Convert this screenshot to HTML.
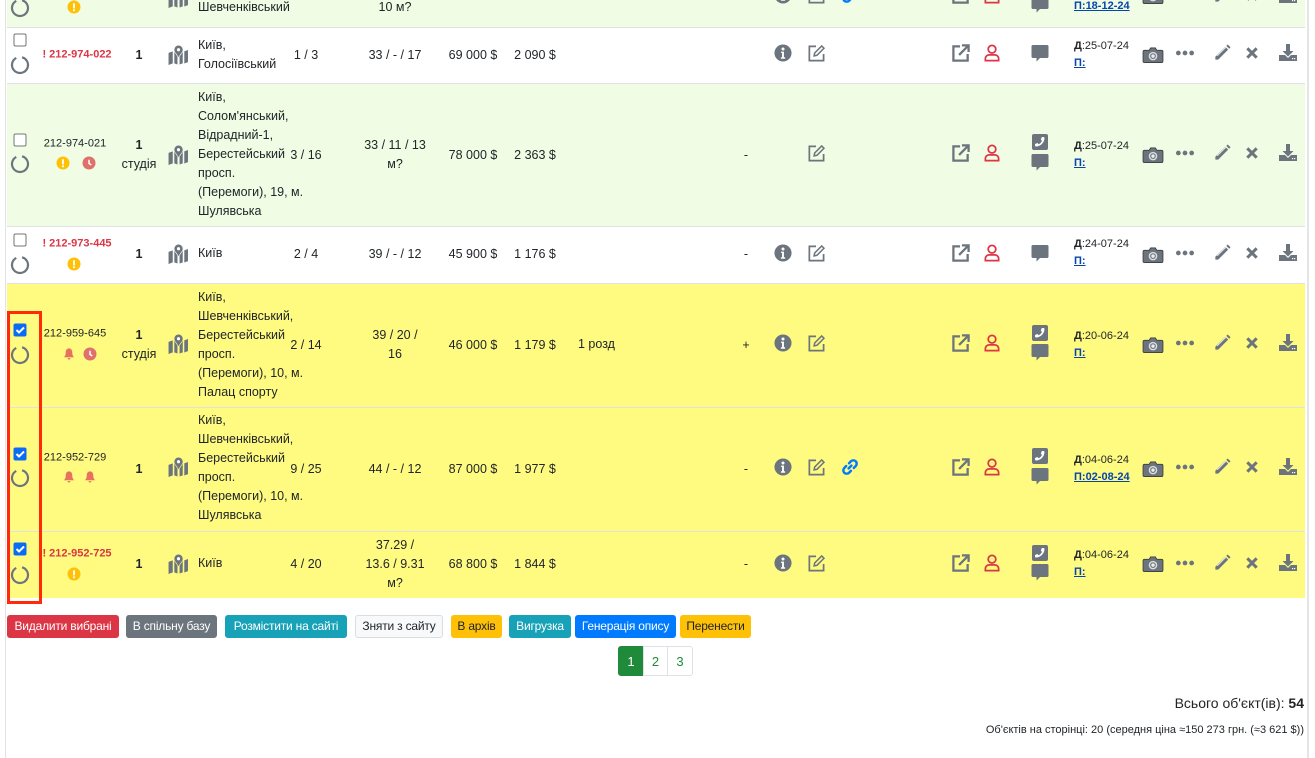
<!DOCTYPE html>
<html><head><meta charset="utf-8">
<style>
*{margin:0;padding:0;box-sizing:border-box}
body{width:1315px;height:758px;overflow:hidden;background:#fff;font-family:"Liberation Sans",Arial,sans-serif;font-size:12.5px;color:#212529;position:relative}
.row{position:absolute;left:7px;width:1298px;border-bottom:1px solid #dee2e6}
.g{background:#f0fce4}.w{background:#fff}.y{background:#fffb80}
.a{position:absolute;transform:translate(-50%,-50%);white-space:nowrap;line-height:1}
.t{position:absolute;white-space:nowrap;line-height:19px}
.cb{width:13px;height:13px;border:1px solid #767676;border-radius:2px;background:#fff}
.cb.on{background:#0a6cf5;border-color:#0a6cf5}
.rid{color:#dc3545;font-weight:bold;font-size:11px}
.id{font-size:11px}
.b{font-weight:bold}
.dt{position:absolute;font-size:11px;line-height:17px;white-space:nowrap}
.dt u{color:#0645ad;font-weight:bold}
.btn{position:absolute;top:615px;height:23px;border-radius:3px;color:#fff;font-size:12px;line-height:23px;text-align:center;letter-spacing:-0.2px}
.pg{position:absolute;top:646px;height:30px;line-height:30px;text-align:center;font-size:13px;color:#1e8a3a;border:1px solid #dee2e6}
</style></head><body>
<svg width="0" height="0" style="position:absolute">
<defs>
<symbol id="ld" viewBox="0 0 20 20"><circle cx="10" cy="10" r="8" fill="none" stroke="#6c757d" stroke-width="2.2" stroke-dasharray="44 6.3" transform="rotate(-75 10 10)"/></symbol>
<symbol id="wr" viewBox="0 0 14 14"><circle cx="7" cy="7" r="7" fill="#ffc107"/><rect x="6" y="3" width="2" height="5.5" fill="#fff"/><rect x="6" y="9.5" width="2" height="2" fill="#fff"/></symbol>
<symbol id="ck" viewBox="0 0 14 14"><circle cx="7" cy="7" r="7" fill="#e0706b"/><path d="M7 3.5V7.5L9.5 9" stroke="#fff" stroke-width="1.6" fill="none"/></symbol>
<symbol id="bl" viewBox="0 0 14 14"><path d="M7 1C4.5 1 3.5 3 3.5 5.5C3.5 8 2.5 9.5 1.5 10.5H12.5C11.5 9.5 10.5 8 10.5 5.5C10.5 3 9.5 1 7 1Z M5.5 11.5h3a1.5 1.5 0 0 1-3 0Z" fill="#e8705f"/></symbol>
<symbol id="mp" viewBox="0 0 20 20"><path d="M1 8l4-1.5v11.5l-4 1.5Z M6.5 7l3 4.5v7.5l-3-1Z M11.5 11.5l3-4.5v11l-3 1Z M16 6.5l3.5-1.3v11.6l-3.5 1.3Z" fill="#6c757d"/><circle cx="10.5" cy="5" r="4" fill="#6c757d"/><path d="M7 6.5L10.5 12L14 6.5Z" fill="#6c757d"/><circle cx="10.5" cy="5" r="1.5" fill="#fff"/></symbol>
<symbol id="in" viewBox="0 0 20 20"><circle cx="10" cy="10" r="9" fill="#6c757d"/><circle cx="10" cy="5.8" r="1.6" fill="#fff"/><path d="M8 8.5h3v6h1.2v1.5H7.8v-1.5H9v-4.5H8Z" fill="#fff"/></symbol>
<symbol id="ed" viewBox="0 0 20 20"><path d="M10 3H3v15h15v-7" fill="none" stroke="#6c757d" stroke-width="1.8"/><path d="M8 13l0.6-3L16 2.6l2.4 2.4L11 12.4Z" fill="none" stroke="#6c757d" stroke-width="1.6"/></symbol>
<symbol id="lk" viewBox="0 0 20 20"><path d="M8.5 11.5l3-3M9 6l2-2a3.5 3.5 0 0 1 5 5l-2 2M11 14l-2 2a3.5 3.5 0 0 1-5-5l2-2" fill="none" stroke="#007bff" stroke-width="2.6" stroke-linecap="round"/></symbol>
<symbol id="ex" viewBox="0 0 20 20"><path d="M9 3H2v15h15v-7" fill="none" stroke="#6c757d" stroke-width="2.4"/><path d="M8 12L17 3M11 2h7v7" fill="none" stroke="#6c757d" stroke-width="2.4"/></symbol>
<symbol id="ps" viewBox="0 0 20 20"><circle cx="10" cy="6" r="4" fill="none" stroke="#dc3545" stroke-width="1.8"/><path d="M3 18v-2a4 4 0 0 1 4-4h6a4 4 0 0 1 4 4v2Z" fill="none" stroke="#dc3545" stroke-width="1.8"/></symbol>
<symbol id="ch" viewBox="0 0 20 20"><path d="M3 2h14a1.5 1.5 0 0 1 1.5 1.5v10a1.5 1.5 0 0 1-1.5 1.5H10l-3.5 3.5V15H3a1.5 1.5 0 0 1-1.5-1.5v-10A1.5 1.5 0 0 1 3 2Z" fill="#6c757d"/></symbol>
<symbol id="ph" viewBox="0 0 16 16"><rect x="0" y="0" width="16" height="16" rx="2" fill="#6c757d"/><path d="M11.5 3c0.5 0 1 0.5 1 1 0 4.5-4 8.5-8.5 8.5-0.5 0-1-0.5-1-1l0-1.5 2.5-1 1.2 1.2c1.5-0.7 2.6-1.8 3.3-3.3L8.8 5.7l1-2.7Z" fill="#fff"/></symbol>
<symbol id="cm" viewBox="0 0 22 20"><path d="M2 5h5l1.5-2.5h5L15 5h5a1.5 1.5 0 0 1 1.5 1.5v10A1.5 1.5 0 0 1 20 18H2a1.5 1.5 0 0 1-1.5-1.5v-10A1.5 1.5 0 0 1 2 5Z" fill="#6c757d" stroke="#333" stroke-width="0.8"/><circle cx="11" cy="11.2" r="4.5" fill="#ddd"/><circle cx="11" cy="11.2" r="3" fill="#6c757d"/><circle cx="11" cy="11.2" r="1.8" fill="#eee"/></symbol>
<symbol id="dt3" viewBox="0 0 20 6"><circle cx="3" cy="3" r="2.5" fill="#6c757d"/><circle cx="10" cy="3" r="2.5" fill="#6c757d"/><circle cx="17" cy="3" r="2.5" fill="#6c757d"/></symbol>
<symbol id="pn" viewBox="0 0 20 20"><path d="M3 14L13.5 3.5l3 3L6 17H3Z" fill="#6c757d"/><path d="M14.5 2.5l1.5-1.5 3 3-1.5 1.5Z" fill="#6c757d"/><path d="M5 13l9-9" stroke="#fff" stroke-width="0.8"/></symbol>
<symbol id="xx" viewBox="0 0 16 16"><path d="M3 3l10 10M13 3L3 13" stroke="#6c757d" stroke-width="3.2"/></symbol>
<symbol id="dl" viewBox="0 0 20 20"><path d="M8 1h4v7h3.5L10 13.5 4.5 8H8Z" fill="#6c757d"/><path d="M1 12h6l3 3 3-3h6v6H1Z" fill="#6c757d"/><rect x="14" y="15" width="1.2" height="1.2" fill="#fff"/><rect x="16" y="15" width="1.2" height="1.2" fill="#fff"/></symbol>
</defs></svg>

<div style="position:absolute;left:5px;top:0;width:1px;height:758px;background:#e3e3e3"></div>
<div style="position:absolute;left:1307px;top:0;width:2px;height:758px;background:#e5e5e5"></div>

<div class="row g" style="top:0;height:28px"></div>
<div class="row w" style="top:28px;height:56px"></div>
<div class="row g" style="top:84px;height:143px"></div>
<div class="row w" style="top:227px;height:57px"></div>
<div class="row y" style="top:284px;height:124px"></div>
<div class="row y" style="top:408px;height:124px"></div>
<div class="row y" style="top:532px;height:66px;border-bottom:none"></div>

<!-- ROW 0 -->
<svg class="a" style="left:20px;top:8px" width="20" height="20"><use href="#ld"/></svg>
<svg class="a" style="left:74px;top:7px" width="13" height="13"><use href="#wr"/></svg>
<svg class="a" style="left:178px;top:-2px" width="21" height="21"><use href="#mp"/></svg>
<div class="t" style="left:198px;top:-2px">Шевченківський</div>
<div class="a" style="left:395px;top:7px">10 м?</div>
<svg class="a" style="left:783px;top:-5px" width="19" height="19"><use href="#in"/></svg>
<svg class="a" style="left:816px;top:-5px" width="19" height="19"><use href="#ed"/></svg>
<svg class="a" style="left:850px;top:-5px" width="19" height="19"><use href="#lk"/></svg>
<svg class="a" style="left:961px;top:-5px" width="19" height="19"><use href="#ex"/></svg>
<svg class="a" style="left:992px;top:-5px" width="19" height="19"><use href="#ps"/></svg>
<svg class="a" style="left:1040px;top:4px" width="20" height="20"><use href="#ch"/></svg>
<div class="dt" style="left:1074px;top:-2px"><u>П:18-12-24</u></div>
<svg class="a" style="left:1153px;top:-4px" width="21" height="19"><use href="#cm"/></svg>
<svg class="a" style="left:1222px;top:-5px" width="19" height="19"><use href="#pn"/></svg>
<svg class="a" style="left:1252px;top:-5px" width="15" height="15"><use href="#xx"/></svg>
<svg class="a" style="left:1288px;top:-5px" width="20" height="20"><use href="#dl"/></svg>

<!-- ROW 1 -->
<div class="a cb" style="left:20px;top:40px"></div>
<svg class="a" style="left:20px;top:65px" width="20" height="20"><use href="#ld"/></svg>
<div class="a rid" style="left:77px;top:55px">! 212-974-022</div>
<div class="a b" style="left:139px;top:55px">1</div>
<svg class="a" style="left:178px;top:55px" width="21" height="21"><use href="#mp"/></svg>
<div class="t" style="left:198px;top:36px">Київ,<br>Голосіївський</div>
<div class="a" style="left:306px;top:55px">1 / 3</div>
<div class="a" style="left:395px;top:55px">33 / - / 17</div>
<div class="a" style="left:473px;top:55px">69 000 $</div>
<div class="a" style="left:535px;top:55px">2 090 $</div>
<svg class="a" style="left:783px;top:53px" width="19" height="19"><use href="#in"/></svg>
<svg class="a" style="left:816px;top:53px" width="19" height="19"><use href="#ed"/></svg>
<svg class="a" style="left:961px;top:53px" width="19" height="19"><use href="#ex"/></svg>
<svg class="a" style="left:992px;top:53px" width="19" height="19"><use href="#ps"/></svg>
<svg class="a" style="left:1040px;top:53px" width="20" height="20"><use href="#ch"/></svg>
<div class="dt" style="left:1074px;top:38px"><b>Д</b>:25-07-24<br><u>П:</u></div>
<svg class="a" style="left:1153px;top:55px" width="21" height="19"><use href="#cm"/></svg>
<svg class="a" style="left:1185px;top:53px" width="19" height="6"><use href="#dt3"/></svg>
<svg class="a" style="left:1222px;top:53px" width="19" height="19"><use href="#pn"/></svg>
<svg class="a" style="left:1252px;top:53px" width="15" height="15"><use href="#xx"/></svg>
<svg class="a" style="left:1288px;top:53px" width="20" height="20"><use href="#dl"/></svg>

<!-- ROW 2 -->
<div class="a cb" style="left:20px;top:140px"></div>
<svg class="a" style="left:20px;top:164px" width="20" height="20"><use href="#ld"/></svg>
<div class="a id" style="left:75px;top:144px">212-974-021</div>
<svg class="a" style="left:63px;top:163px" width="13" height="13"><use href="#wr"/></svg>
<svg class="a" style="left:89px;top:163px" width="13" height="13"><use href="#ck"/></svg>
<div class="a b" style="left:139px;top:145px">1</div>
<div class="a" style="left:139px;top:164px">студія</div>
<svg class="a" style="left:178px;top:155px" width="21" height="21"><use href="#mp"/></svg>
<div class="t" style="left:198px;top:88px">Київ,<br>Солом'янський,<br>Відрадний-1,<br>Берестейський<br>просп.<br>(Перемоги), 19, м.<br>Шулявська</div>
<div class="a" style="left:306px;top:155px">3 / 16</div>
<div class="a" style="left:395px;top:145px">33 / 11 / 13</div>
<div class="a" style="left:395px;top:164px">м?</div>
<div class="a" style="left:473px;top:155px">78 000 $</div>
<div class="a" style="left:535px;top:155px">2 363 $</div>
<div class="a" style="left:746px;top:155px">-</div>
<svg class="a" style="left:816px;top:153px" width="19" height="19"><use href="#ed"/></svg>
<svg class="a" style="left:961px;top:153px" width="19" height="19"><use href="#ex"/></svg>
<svg class="a" style="left:992px;top:153px" width="19" height="19"><use href="#ps"/></svg>
<svg class="a" style="left:1040px;top:142px" width="16" height="16"><use href="#ph"/></svg>
<svg class="a" style="left:1040px;top:162px" width="20" height="20"><use href="#ch"/></svg>
<div class="dt" style="left:1074px;top:138px"><b>Д</b>:25-07-24<br><u>П:</u></div>
<svg class="a" style="left:1153px;top:155px" width="21" height="19"><use href="#cm"/></svg>
<svg class="a" style="left:1185px;top:153px" width="19" height="6"><use href="#dt3"/></svg>
<svg class="a" style="left:1222px;top:153px" width="19" height="19"><use href="#pn"/></svg>
<svg class="a" style="left:1252px;top:153px" width="15" height="15"><use href="#xx"/></svg>
<svg class="a" style="left:1288px;top:153px" width="20" height="20"><use href="#dl"/></svg>

<!-- ROW 3 -->
<div class="a cb" style="left:20px;top:240px"></div>
<svg class="a" style="left:20px;top:265px" width="20" height="20"><use href="#ld"/></svg>
<div class="a rid" style="left:77px;top:244px">! 212-973-445</div>
<svg class="a" style="left:74px;top:264px" width="13" height="13"><use href="#wr"/></svg>
<div class="a b" style="left:139px;top:254px">1</div>
<svg class="a" style="left:178px;top:254px" width="21" height="21"><use href="#mp"/></svg>
<div class="t" style="left:198px;top:244px">Київ</div>
<div class="a" style="left:306px;top:254px">2 / 4</div>
<div class="a" style="left:395px;top:254px">39 / - / 12</div>
<div class="a" style="left:473px;top:254px">45 900 $</div>
<div class="a" style="left:535px;top:254px">1 176 $</div>
<div class="a" style="left:746px;top:254px">-</div>
<svg class="a" style="left:783px;top:253px" width="19" height="19"><use href="#in"/></svg>
<svg class="a" style="left:816px;top:253px" width="19" height="19"><use href="#ed"/></svg>
<svg class="a" style="left:961px;top:253px" width="19" height="19"><use href="#ex"/></svg>
<svg class="a" style="left:992px;top:253px" width="19" height="19"><use href="#ps"/></svg>
<svg class="a" style="left:1040px;top:253px" width="20" height="20"><use href="#ch"/></svg>
<div class="dt" style="left:1074px;top:236px"><b>Д</b>:24-07-24<br><u>П:</u></div>
<svg class="a" style="left:1153px;top:255px" width="21" height="19"><use href="#cm"/></svg>
<svg class="a" style="left:1185px;top:253px" width="19" height="6"><use href="#dt3"/></svg>
<svg class="a" style="left:1222px;top:253px" width="19" height="19"><use href="#pn"/></svg>
<svg class="a" style="left:1252px;top:253px" width="15" height="15"><use href="#xx"/></svg>
<svg class="a" style="left:1288px;top:253px" width="20" height="20"><use href="#dl"/></svg>

<!-- ROW 4 -->
<div class="a cb on" style="left:20px;top:330px"><svg width="13" height="13" style="position:absolute;left:-1px;top:-1px"><path d="M3 6.5l2.5 2.5 5-5" stroke="#fff" stroke-width="2" fill="none"/></svg></div>
<svg class="a" style="left:20px;top:355px" width="20" height="20"><use href="#ld"/></svg>
<div class="a id" style="left:75px;top:334px">212-959-645</div>
<svg class="a" style="left:69px;top:354px" width="13" height="13"><use href="#bl"/></svg>
<svg class="a" style="left:90px;top:354px" width="13" height="13"><use href="#ck"/></svg>
<div class="a b" style="left:139px;top:335px">1</div>
<div class="a" style="left:139px;top:354px">студія</div>
<svg class="a" style="left:178px;top:344px" width="21" height="21"><use href="#mp"/></svg>
<div class="t" style="left:198px;top:288px">Київ,<br>Шевченківський,<br>Берестейський<br>просп.<br>(Перемоги), 10, м.<br>Палац спорту</div>
<div class="a" style="left:306px;top:345px">2 / 14</div>
<div class="a" style="left:395px;top:335px">39 / 20 /</div>
<div class="a" style="left:395px;top:354px">16</div>
<div class="a" style="left:473px;top:345px">46 000 $</div>
<div class="a" style="left:535px;top:345px">1 179 $</div>
<div class="t" style="left:578px;top:335px">1 розд</div>
<div class="a" style="left:746px;top:345px">+</div>
<svg class="a" style="left:783px;top:343px" width="19" height="19"><use href="#in"/></svg>
<svg class="a" style="left:816px;top:343px" width="19" height="19"><use href="#ed"/></svg>
<svg class="a" style="left:961px;top:343px" width="19" height="19"><use href="#ex"/></svg>
<svg class="a" style="left:992px;top:343px" width="19" height="19"><use href="#ps"/></svg>
<svg class="a" style="left:1040px;top:333px" width="16" height="16"><use href="#ph"/></svg>
<svg class="a" style="left:1040px;top:352px" width="20" height="20"><use href="#ch"/></svg>
<div class="dt" style="left:1074px;top:328px"><b>Д</b>:20-06-24<br><u>П:</u></div>
<svg class="a" style="left:1153px;top:345px" width="21" height="19"><use href="#cm"/></svg>
<svg class="a" style="left:1185px;top:343px" width="19" height="6"><use href="#dt3"/></svg>
<svg class="a" style="left:1222px;top:343px" width="19" height="19"><use href="#pn"/></svg>
<svg class="a" style="left:1252px;top:343px" width="15" height="15"><use href="#xx"/></svg>
<svg class="a" style="left:1288px;top:343px" width="20" height="20"><use href="#dl"/></svg>

<!-- ROW 5 -->
<div class="a cb on" style="left:20px;top:454px"><svg width="13" height="13" style="position:absolute;left:-1px;top:-1px"><path d="M3 6.5l2.5 2.5 5-5" stroke="#fff" stroke-width="2" fill="none"/></svg></div>
<svg class="a" style="left:20px;top:478px" width="20" height="20"><use href="#ld"/></svg>
<div class="a id" style="left:75px;top:458px">212-952-729</div>
<svg class="a" style="left:69px;top:477px" width="13" height="13"><use href="#bl"/></svg>
<svg class="a" style="left:90px;top:477px" width="13" height="13"><use href="#bl"/></svg>
<div class="a b" style="left:139px;top:469px">1</div>
<svg class="a" style="left:178px;top:467px" width="21" height="21"><use href="#mp"/></svg>
<div class="t" style="left:198px;top:411px">Київ,<br>Шевченківський,<br>Берестейський<br>просп.<br>(Перемоги), 10, м.<br>Шулявська</div>
<div class="a" style="left:306px;top:469px">9 / 25</div>
<div class="a" style="left:395px;top:469px">44 / - / 12</div>
<div class="a" style="left:473px;top:469px">87 000 $</div>
<div class="a" style="left:535px;top:469px">1 977 $</div>
<div class="a" style="left:746px;top:469px">-</div>
<svg class="a" style="left:783px;top:467px" width="19" height="19"><use href="#in"/></svg>
<svg class="a" style="left:816px;top:467px" width="19" height="19"><use href="#ed"/></svg>
<svg class="a" style="left:850px;top:467px" width="19" height="19"><use href="#lk"/></svg>
<svg class="a" style="left:961px;top:467px" width="19" height="19"><use href="#ex"/></svg>
<svg class="a" style="left:992px;top:467px" width="19" height="19"><use href="#ps"/></svg>
<svg class="a" style="left:1040px;top:456px" width="16" height="16"><use href="#ph"/></svg>
<svg class="a" style="left:1040px;top:476px" width="20" height="20"><use href="#ch"/></svg>
<div class="dt" style="left:1074px;top:452px"><b>Д</b>:04-06-24<br><u>П:02-08-24</u></div>
<svg class="a" style="left:1153px;top:469px" width="21" height="19"><use href="#cm"/></svg>
<svg class="a" style="left:1185px;top:467px" width="19" height="6"><use href="#dt3"/></svg>
<svg class="a" style="left:1222px;top:467px" width="19" height="19"><use href="#pn"/></svg>
<svg class="a" style="left:1252px;top:467px" width="15" height="15"><use href="#xx"/></svg>
<svg class="a" style="left:1288px;top:467px" width="20" height="20"><use href="#dl"/></svg>

<!-- ROW 6 -->
<div class="a cb on" style="left:20px;top:549px"><svg width="13" height="13" style="position:absolute;left:-1px;top:-1px"><path d="M3 6.5l2.5 2.5 5-5" stroke="#fff" stroke-width="2" fill="none"/></svg></div>
<svg class="a" style="left:20px;top:575px" width="20" height="20"><use href="#ld"/></svg>
<div class="a rid" style="left:77px;top:554px">! 212-952-725</div>
<svg class="a" style="left:74px;top:574px" width="13" height="13"><use href="#wr"/></svg>
<div class="a b" style="left:139px;top:564px">1</div>
<svg class="a" style="left:178px;top:564px" width="21" height="21"><use href="#mp"/></svg>
<div class="t" style="left:198px;top:554px">Київ</div>
<div class="a" style="left:306px;top:564px">4 / 20</div>
<div class="a" style="left:395px;top:545px">37.29 /</div>
<div class="a" style="left:395px;top:564px">13.6 / 9.31</div>
<div class="a" style="left:395px;top:583px">м?</div>
<div class="a" style="left:473px;top:564px">68 800 $</div>
<div class="a" style="left:535px;top:564px">1 844 $</div>
<div class="a" style="left:746px;top:564px">-</div>
<svg class="a" style="left:783px;top:563px" width="19" height="19"><use href="#in"/></svg>
<svg class="a" style="left:816px;top:563px" width="19" height="19"><use href="#ed"/></svg>
<svg class="a" style="left:961px;top:563px" width="19" height="19"><use href="#ex"/></svg>
<svg class="a" style="left:992px;top:563px" width="19" height="19"><use href="#ps"/></svg>
<svg class="a" style="left:1040px;top:553px" width="16" height="16"><use href="#ph"/></svg>
<svg class="a" style="left:1040px;top:572px" width="20" height="20"><use href="#ch"/></svg>
<div class="dt" style="left:1074px;top:547px"><b>Д</b>:04-06-24<br><u>П:</u></div>
<svg class="a" style="left:1153px;top:564px" width="21" height="19"><use href="#cm"/></svg>
<svg class="a" style="left:1185px;top:563px" width="19" height="6"><use href="#dt3"/></svg>
<svg class="a" style="left:1222px;top:563px" width="19" height="19"><use href="#pn"/></svg>
<svg class="a" style="left:1252px;top:563px" width="15" height="15"><use href="#xx"/></svg>
<svg class="a" style="left:1288px;top:563px" width="20" height="20"><use href="#dl"/></svg>

<div style="position:absolute;left:7px;top:311px;width:35px;height:293px;border:3px solid #ff2a0a"></div>

<div class="btn" style="left:7px;width:112px;background:#dc3545">Видалити вибрані</div>
<div class="btn" style="left:126px;width:91px;background:#6c757d">В спільну базу</div>
<div class="btn" style="left:225px;width:122px;background:#17a2b8">Розмістити на сайті</div>
<div class="btn" style="left:355px;width:88px;background:#f8f9fa;color:#212529;border:1px solid #ddd;line-height:21px">Зняти з сайту</div>
<div class="btn" style="left:451px;width:51px;background:#ffc107;color:#212529">В архів</div>
<div class="btn" style="left:509px;width:62px;background:#17a2b8">Вигрузка</div>
<div class="btn" style="left:575px;width:101px;background:#007bff">Генерація опису</div>
<div class="btn" style="left:680px;width:71px;background:#ffc107;color:#212529">Перенести</div>

<div class="pg" style="left:618px;width:26px;background:#1e8a3a;color:#fff;border-color:#1e8a3a;border-radius:3px 0 0 3px">1</div>
<div class="pg" style="left:643px;width:25px">2</div>
<div class="pg" style="left:667px;width:26px;border-radius:0 3px 3px 0">3</div>

<div style="position:absolute;right:11px;top:695px;font-size:14px;white-space:nowrap">Всього об'єкт(ів): <b>54</b></div>
<div style="position:absolute;right:11px;top:724px;font-size:11px;white-space:nowrap">Об'єктів на сторінці: 20 (середня ціна ≈150 273 грн. (≈3 621 $))</div>
</body></html>
